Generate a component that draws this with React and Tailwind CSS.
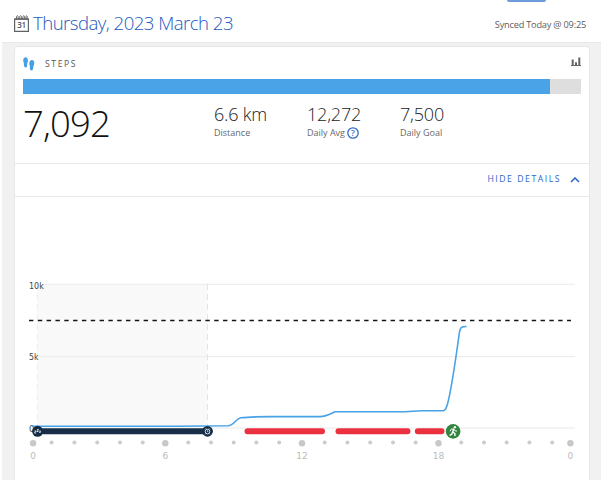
const stats = [
  { value: '6.6 km', label: 'Distance' },
  { value: '12,272', label: 'Daily Avg', help: true },
  { value: '7,500', label: 'Daily Goal' },
];

const minorTicks = [51.6, 74.4, 97.2, 120, 142.7, 188.2, 211, 233.7, 256.4, 279.2, 324.7, 347.4, 370.2, 393, 415.6, 461.2, 484, 506.7, 529.4, 552.2];
const majorTicks = [[33.1, '0'], [165.3, '6'], [302, '12'], [438.5, '18'], [570.4, '0']];

function CalendarIcon() {
  return (
    <svg className="h-[17px] w-[15px]" viewBox="0 0 15 17" fill="none" stroke="#626262">
      <path d="M.6 4.2h13.8v12.1H.6z" strokeWidth="1.2" />
      <path d="M.6 4h13.8" strokeWidth="1.2" />
      <path d="M2.5 4V1.3q.9-1.2 1.7 0V4M5.700 4V1.300q.9-1.200 1.700 0V4M8.900 4V1.300q.9-1.200 1.700 0V4M12 4V1.300q.6-1 1.200 0V4" strokeWidth=".9" />
      <text x="7.6" y="13.2" textAnchor="middle" fontSize="8" fontWeight="600" fill="#555" stroke="none" letterSpacing="-.3">31</text>
    </svg>
  );
}

function StepsIcon() {
  return (
    <svg className="h-[14px] w-[12px]" viewBox="0 0 12 14" fill="#46a0e4">
      <path d="M2.6.2C.7.4 0 2 .3 4.1c.2 1.4.7 2.1.6 3.2l3.2.2c.1-1.5 1-2.4.8-4.3C4.700 1.300 3.900.1 2.600.2zM.9 7.300l3.100.2c.3 2.100-.2 3-1.300 2.900C1.500 10.400.7 9.200.9 7.300z" />
      <path d="M9.100 3.100c1.800.2 2.400 1.700 2.100 3.600-.2 1.500-.9 2.300-1 3.700l-3.200-.3c.1-1.300-.8-2.200-.7-3.900.1-1.900 1.300-3.300 2.800-3.100zM6.900 10.100l3.300.3c0 2.100-.8 3.200-1.900 3.100-1.100-.1-1.700-1.400-1.400-3.400z" />
    </svg>
  );
}

function Chart() {
  return (
    <svg className="block h-[283px] w-[574px]" viewBox="15 197 574 283">
      <rect x="37" y="284" width="170.500" height="143" fill="#f9f9f9" />
      <path d="M44 284.300H575M39 356.700H575M36 428.200H575" stroke="#eeeeee" strokeWidth="1.300" />
      <path d="M37.300 284V426" stroke="#eeeeee" strokeDasharray="6 4" />
      <path d="M207.500 284V426" stroke="#e4e4e4" strokeDasharray="6 4" />
      <g fontSize="8.400" fill="#444" className="font-['DejaVu_Sans',sans-serif]">
        <text x="29" y="288.500" textLength="14.800" lengthAdjust="spacingAndGlyphs">10k</text>
        <text x="29" y="359.700" textLength="9.500" lengthAdjust="spacingAndGlyphs">5k</text>
        <text x="29" y="431.700">0</text>
      </g>
      <path d="M29 320.500H571" stroke="#151515" strokeWidth="1.700" strokeDasharray="4.400 4.420" />
      <path d="M32 426.200H175L228 425.800C234 425.500 236 418.500 241 417.800C250 416.600 260 416.700 275 416.600H320C327 416.400 331 413.500 335 411.700H405C412 411.600 414 410.800 422 410.700H443C446 410.700 446 408 447.500 404C452 388 457 349 459.500 332C460.300 327.500 461 326.500 466.500 326.500" fill="none" stroke="#48a2e6" strokeWidth="1.600" />
      <path d="M37.500 431.300H207.500" stroke="#192f49" strokeWidth="6" />
      <path d="M247.500 431.300H322M338.500 431.300H407.500M417.800 431.300H441.500" stroke="#eb3040" strokeWidth="6" strokeLinecap="round" />
      <circle cx="37.600" cy="431.300" r="5.500" fill="#152c47" />
      <path d="M34.400 431h1.800l-1.800 2h1.800M37 429.600h1.500l-1.500 1.900h1.500M39.400 431h1.200l-1.200 1.500h1.200" fill="none" stroke="#fff" strokeWidth=".8" />
      <circle cx="207.500" cy="431.300" r="5.400" fill="#152c47" />
      <circle cx="207.500" cy="431.600" r="2.300" fill="none" stroke="#e9edf2" strokeWidth=".9" />
      <path d="M205 429.300l1-1M210 429.300l-1-1M207.500 430.400v1.300h.9M206 433.500l-.6.8M209 433.500l.6.8" fill="none" stroke="#e9edf2" strokeWidth=".8" />
      <circle cx="453.100" cy="431.400" r="7.300" fill="#338541" />
      <circle cx="454.900" cy="427.200" r="1.200" fill="#fff" />
      <path d="M453.700 428.700L452.800 432L454.900 433.500L454.900 436M452.700 431.800L451.700 434.200L449.600 435.500" fill="none" stroke="#fff" strokeWidth="1.400" />
      <path d="M453.600 429L451.100 429.200L450.200 431.300M454 429.200L455.200 431L457 431" fill="none" stroke="#fff" strokeWidth="1" />
      <g fill="#cccccc">
        {minorTicks.map((x) => <circle key={x} cx={x} cy="442.400" r="2" />)}
      </g>
      {majorTicks.map(([x, label]) => (
        <g key={x} fill="#c8c8c8" className="font-['DejaVu_Sans',sans-serif]">
          <circle cx={x} cy="443.300" r="3.200" />
          <text x={x} y="459.300" fontSize="9" textAnchor="middle" fill="#bbbbbb">{label}</text>
        </g>
      ))}
    </svg>
  );
}

export default function App() {
  return (
    <div className="relative flex h-[480px] w-[601px] flex-col overflow-hidden bg-white font-['Open_Sans',sans-serif]">
      <div className="absolute left-[507px] top-0 h-[2px] w-[39px] rounded-b-sm bg-[#6f9adb]" />
      <header className="flex h-[42px] shrink-0 items-center pl-[14px] pr-[15px] pt-[4px]">
        <CalendarIcon />
        <h1 className="ml-[4px] whitespace-nowrap text-[18.600px] font-[330] leading-6 tracking-[-0.530px] text-[#2459bd]">Thursday, 2023 March 23</h1>
        <span className="ml-auto mt-1 whitespace-nowrap text-[9.200px] tracking-[-0.200px] text-[#5c5c5c]">Synced Today @ 09:25</span>
      </header>
      <main className="ml-[2px] flex flex-1 border-t border-[#e8e8e8] bg-[#f1f1f1] pl-[12px] pr-[11px] pt-[3px]">
        <section className="h-[440px] w-[576px] shrink-0 overflow-hidden rounded-t-sm border border-[#e7e7e7] bg-white">
          <div className="h-[116px] px-[8px] pt-[10px]">
            <div className="flex h-[22px] items-start">
              <StepsIcon />
              <span className="ml-[10px] text-[8.600px] leading-[14px] tracking-[1.600px] text-[#555]">STEPS</span>
              <svg className="ml-auto h-[9px] w-[10px]" viewBox="0 0 10 9" fill="#656565">
                <path d="M0 8h10v1H0zM.7 2.500h2v5.500h-2zM4 5.200h2V8H4zM7.300.5h2V8h-2z" />
              </svg>
            </div>
            <div className="h-[15px] w-[558px] bg-[#dedede]">
              <div className="h-full w-[527px] bg-[#4ba3e7]" />
            </div>
            <div className="flex">
              <div className="w-[191px] pt-[8px] text-[36.500px] font-light leading-[43px] tracking-[-0.850px] text-[#111]">7,092</div>
              {stats.map((stat) => (
                <div key={stat.label} className="w-[93px] pt-[8px]">
                  <div className="whitespace-nowrap text-[18px] font-[330] leading-[24px] tracking-[-0.200px] text-[#222]">{stat.value}</div>
                  <div className="flex h-[14px] items-center gap-[2px] whitespace-nowrap text-[9px] text-[#686868]">
                    {stat.label}
                    {stat.help && (
                      <svg className="h-[12px] w-[12px]" viewBox="0 0 12 12">
                        <circle cx="6" cy="6" r="5.200" fill="none" stroke="#3269c8" strokeWidth="1.300" />
                        <text x="6" y="9" textAnchor="middle" fontSize="8.500" fontWeight="600" fill="#3269c8">?</text>
                      </svg>
                    )}
                  </div>
                </div>
              ))}
            </div>
          </div>
          <div className="flex h-[34px] items-center justify-end border-y border-[#e9e9e9] pr-[9px]">
            <span className="text-[8.700px] tracking-[1.520px] text-[#2d68ca]">HIDE DETAILS</span>
            <svg className="ml-[9px] h-[6px] w-[10px]" viewBox="0 0 10 6" fill="none" stroke="#2d68ca" strokeWidth="1.600"><path d="M1 5l4-4 4 4" /></svg>
          </div>
          <Chart />
        </section>
      </main>
    </div>
  );
}
